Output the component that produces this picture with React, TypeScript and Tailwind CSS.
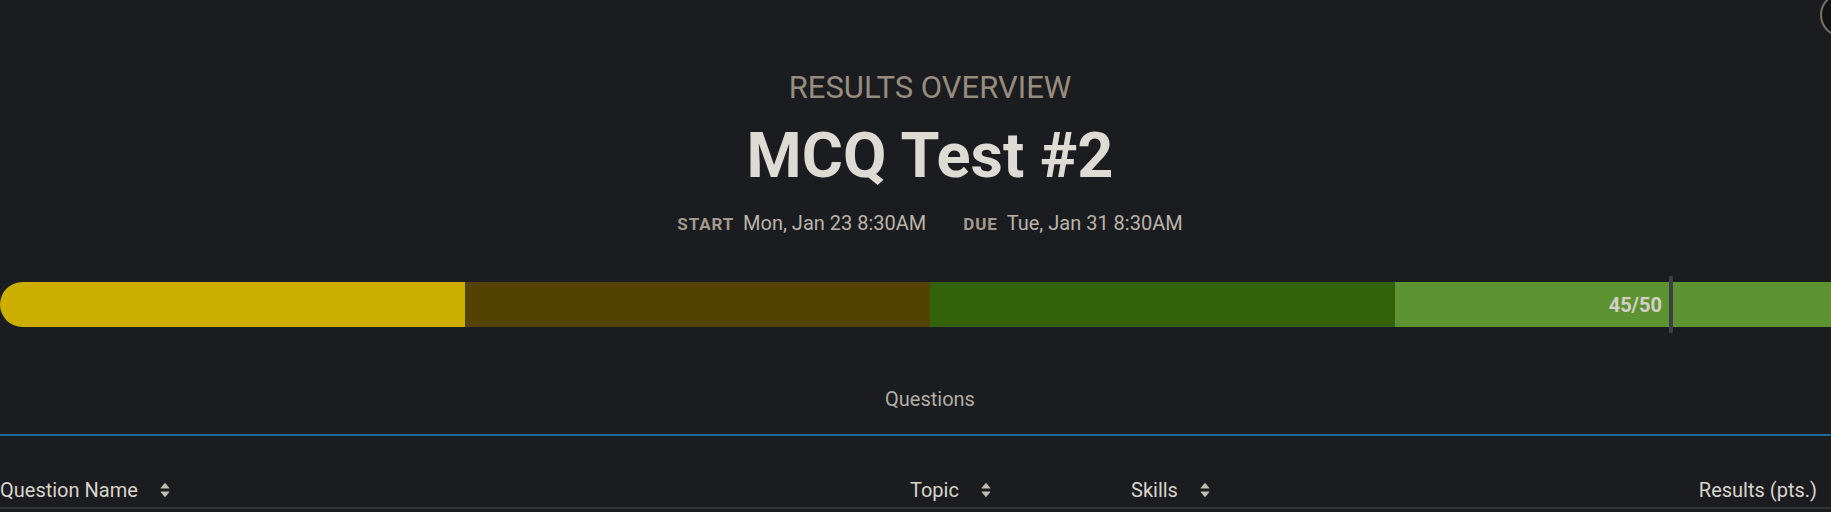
import React from "react";

function SortIcon() {
  return (
    <svg width="10" height="16" viewBox="0 0 10 16" className="shrink-0">
      <path d="M5 0.8 L9.4 6 Q9.6 6.6 9 6.6 L1 6.6 Q0.4 6.6 0.6 6 Z" fill="#c2bcb3" />
      <path d="M5 15.2 L9.4 10 Q9.6 9.4 9 9.4 L1 9.4 Q0.4 9.4 0.6 10 Z" fill="#c2bcb3" />
    </svg>
  );
}

export default function App() {
  const font = { fontFamily: "Roboto, 'Noto Sans', sans-serif" };
  return (
    <div
      className="relative w-full h-[512px] overflow-hidden bg-[#1b1c1f]"
      style={font}
    >
      <div className="w-[1860px] flex flex-col">
        <div className="mt-[70px] text-center text-[31px] leading-[36px] text-[#978d7f]">
          RESULTS OVERVIEW
        </div>
        <h1 className="mt-[18px] text-center text-[63px] leading-[64px] font-bold text-[#dedad4]">
          MCQ Test #2
        </h1>
        <div className="mt-[23px] flex justify-center items-baseline text-[20px] leading-[24px]">
          <span className="text-[17px] font-bold tracking-[0.05em] text-[#a39b8f]">START</span>
          <span className="ml-[9px] text-[#bab4ab]">Mon, Jan 23 8:30AM</span>
          <span className="ml-[37px] text-[17px] font-bold tracking-[0.05em] text-[#a39b8f]">DUE</span>
          <span className="ml-[9px] text-[#bab4ab]">Tue, Jan 31 8:30AM</span>
        </div>

        <div className="relative mt-[46px] h-[45px]">
          <div className="flex h-full rounded-full overflow-hidden">
            <div className="flex-1 bg-[#cbae00]" />
            <div className="flex-1 bg-[#534200]" />
            <div className="flex-1 bg-[#33620b]" />
            <div className="flex-1 bg-[#5e9332]" />
          </div>
          <div className="absolute top-0 bottom-0 right-[calc(10%+12px)] flex items-center text-[20px] font-bold text-[#d3cfc8]">
            45/50
          </div>
          <div className="absolute left-[calc(90%-5px)] top-[-6px] w-[4px] h-[57px] bg-[#3d4046] rounded-[1px]" />
        </div>

        <div className="mt-[60px] border-b-2 border-[#1d6a9a] pb-[23px] text-center text-[20px] leading-[24px] text-[#b3aea6]">
          Questions
        </div>

        <div className="mt-[42px] grid grid-cols-[910px_221px_1fr_auto] border-b-2 border-[#35363a] pb-[5px] text-[20px] leading-[24px] text-[#d9d4cc]">
          <div className="flex items-center gap-[22px]">
            <span>Question Name</span>
            <SortIcon />
          </div>
          <div className="flex items-center gap-[22px]">
            <span>Topic</span>
            <SortIcon />
          </div>
          <div className="flex items-center gap-[22px]">
            <span>Skills</span>
            <SortIcon />
          </div>
          <div className="text-right pr-[43px]">Results (pts.)</div>
        </div>
      </div>

      <div className="absolute left-[1820px] top-[-7px] w-[44px] h-[44px] rounded-full border-2 border-[#7a7366] bg-[#111214]" />
    </div>
  );
}
